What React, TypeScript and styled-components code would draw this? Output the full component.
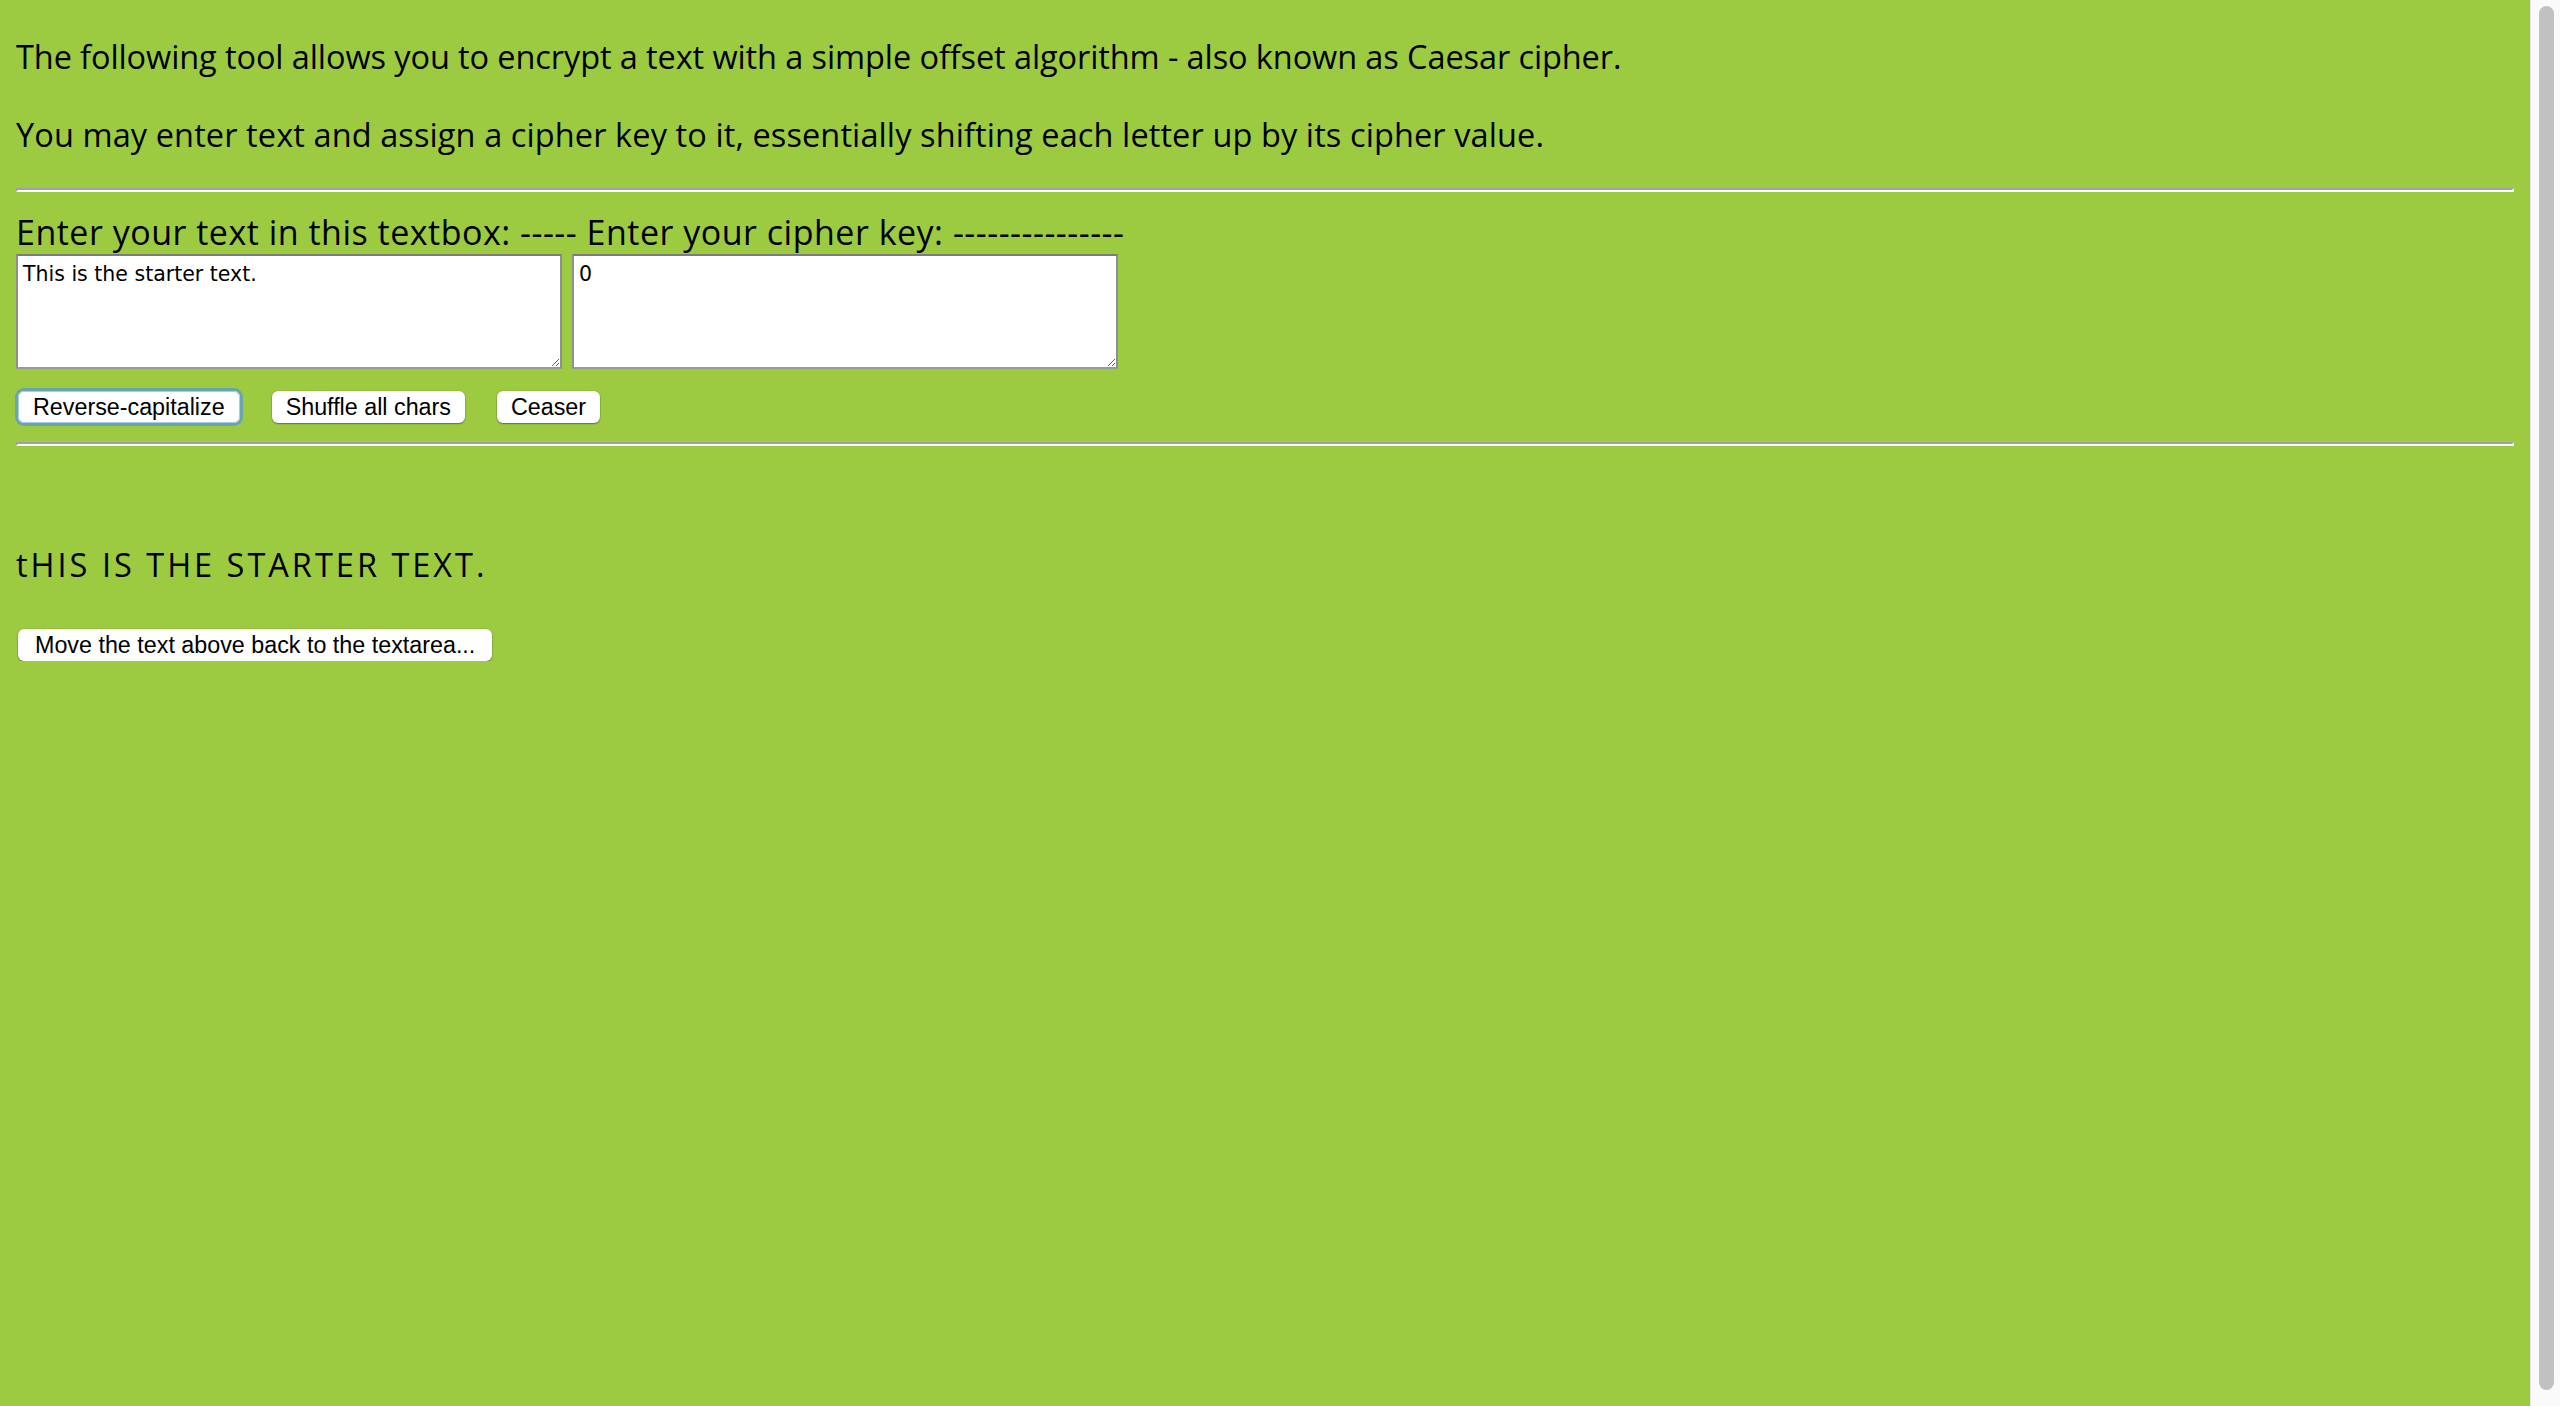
import React from "react";
import styled, { createGlobalStyle } from "styled-components";

const GREEN = "#9ccb42";

const GlobalStyle = createGlobalStyle`
  html {
    background: ${GREEN};
  }
  body {
    margin: 0;
    background: ${GREEN};
  }
`;

const Page = styled.div`
  display: flex;
  flex-direction: column;
  box-sizing: border-box;
  padding: 0 46px 0 16px;
  font-family: "Open Sans", "Noto Sans", sans-serif;
  font-size: 32.5px;
  letter-spacing: -0.1px;
  color: #000;
`;

const Paragraph = styled.p<{ $top: number; $spacing: number }>`
  margin: ${(p) => p.$top}px 0 0;
  line-height: 45px;
  letter-spacing: ${(p) => p.$spacing}px;
  white-space: nowrap;
`;

const Divider = styled.hr<{ $top: number }>`
  box-sizing: border-box;
  height: 4px;
  margin: ${(p) => p.$top}px 0 0;
  padding: 0;
  border-style: solid;
  border-width: 2px;
  border-color: #a19fa8 #ffffff #ffffff #a19fa8;
`;

const FieldLabel = styled.div`
  margin-top: 18px;
  line-height: 44px;
  font-size: 34px;
  letter-spacing: 0.5px;
  white-space: nowrap;
`;

const Fields = styled.div`
  display: flex;
  gap: 10px;
`;

const TextBox = styled.textarea`
  box-sizing: border-box;
  width: 546px;
  height: 115px;
  margin: 0;
  padding: 6px 4px 6px 5px;
  border-style: solid;
  border-width: 2px;
  border-color: #7c7c7c #8f8f8f #999999 #8f8f8f;
  background: #fff;
  font-family: "DejaVu Sans", "Liberation Sans", sans-serif;
  font-size: 20.5px;
  letter-spacing: 0;
  color: #000;
  resize: both;
  outline: none;
`;

const ButtonRow = styled.div<{ $top: number }>`
  display: flex;
  align-items: center;
  gap: 28px;
  margin-top: ${(p) => p.$top}px;
`;

const Button = styled.button<{ $focused?: boolean; $wide?: boolean }>`
  height: 32px;
  margin: 0 2px;
  padding: 0 ${(p) => (p.$focused ? 15 : p.$wide ? 17 : 14)}px;
  border: none;
  border-radius: 6px;
  background: #fff;
  font-family: "Liberation Sans", Arial, sans-serif;
  font-size: 23.3px;
  letter-spacing: 0;
  color: #000;
  white-space: nowrap;
  cursor: pointer;
  box-shadow: ${(p) =>
    p.$focused
      ? "inset 0 0 0 1px #a9cbe8, 0 0 0 3px rgba(84, 150, 214, 0.72)"
      : "0 1px 1.5px rgba(0, 0, 0, 0.38), 0 0 0 0.5px rgba(0, 0, 0, 0.12)"};
`;

const ResultText = styled.div`
  margin-top: 96px;
  line-height: 45px;
  letter-spacing: 3px;
  white-space: nowrap;
`;

const ScrollTrack = styled.div`
  position: fixed;
  top: 0;
  right: 0;
  bottom: 0;
  width: 30px;
  box-sizing: border-box;
  padding: 6px 6px 16px 8px;
  background: #fafafa;
  border-left: 1px solid #e6e6e6;
  display: flex;
`;

const ScrollThumb = styled.div`
  flex: 1;
  border-radius: 8px;
  background: #c1c1c1;
`;

export default function App() {
  return (
    <>
      <GlobalStyle />
      <Page>
        <Paragraph $top={34} $spacing={-0.1}>
          The following tool allows you to encrypt a text with a simple offset
          algorithm - also known as Caesar cipher.
        </Paragraph>
        <Paragraph $top={33} $spacing={0.1}>
          You may enter text and assign a cipher key to it, essentially
          shifting each letter up by its cipher value.
        </Paragraph>
        <Divider $top={31} />
        <FieldLabel>
          Enter your text in this textbox: ----- Enter your cipher key:
          ---------------
        </FieldLabel>
        <Fields>
          <TextBox defaultValue="This is the starter text." />
          <TextBox defaultValue="0" />
        </Fields>
        <ButtonRow $top={22}>
          <Button $focused>Reverse-capitalize</Button>
          <Button>Shuffle all chars</Button>
          <Button>Ceaser</Button>
        </ButtonRow>
        <Divider $top={19} />
        <ResultText>tHIS IS THE STARTER TEXT.</ResultText>
        <ButtonRow $top={42}>
          <Button $wide>Move the text above back to the textarea...</Button>
        </ButtonRow>
      </Page>
      <ScrollTrack>
        <ScrollThumb />
      </ScrollTrack>
    </>
  );
}
